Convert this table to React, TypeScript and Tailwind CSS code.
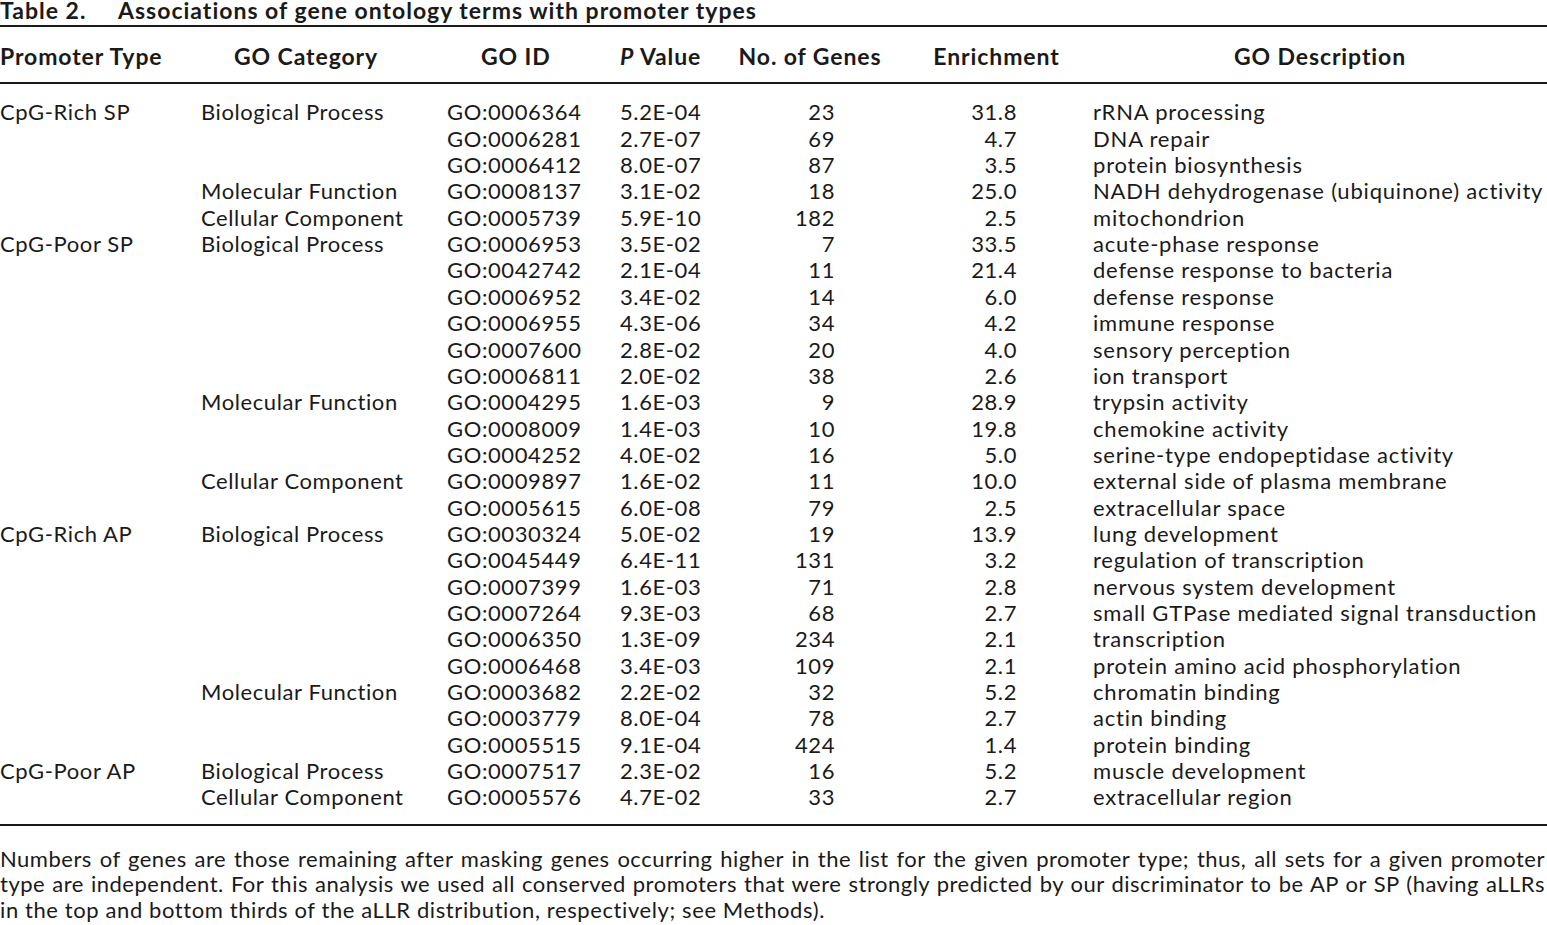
import React from "react";

type Row = { p?: string; c?: string; id: string; pv: string; n: string; e: string; d: string };

const rows: Row[] = [
  { p: "CpG-Rich SP", c: "Biological Process", id: "GO:0006364", pv: "5.2E-04", n: "23", e: "31.8", d: "rRNA processing" },
  { id: "GO:0006281", pv: "2.7E-07", n: "69", e: "4.7", d: "DNA repair" },
  { id: "GO:0006412", pv: "8.0E-07", n: "87", e: "3.5", d: "protein biosynthesis" },
  { c: "Molecular Function", id: "GO:0008137", pv: "3.1E-02", n: "18", e: "25.0", d: "NADH dehydrogenase (ubiquinone) activity" },
  { c: "Cellular Component", id: "GO:0005739", pv: "5.9E-10", n: "182", e: "2.5", d: "mitochondrion" },
  { p: "CpG-Poor SP", c: "Biological Process", id: "GO:0006953", pv: "3.5E-02", n: "7", e: "33.5", d: "acute-phase response" },
  { id: "GO:0042742", pv: "2.1E-04", n: "11", e: "21.4", d: "defense response to bacteria" },
  { id: "GO:0006952", pv: "3.4E-02", n: "14", e: "6.0", d: "defense response" },
  { id: "GO:0006955", pv: "4.3E-06", n: "34", e: "4.2", d: "immune response" },
  { id: "GO:0007600", pv: "2.8E-02", n: "20", e: "4.0", d: "sensory perception" },
  { id: "GO:0006811", pv: "2.0E-02", n: "38", e: "2.6", d: "ion transport" },
  { c: "Molecular Function", id: "GO:0004295", pv: "1.6E-03", n: "9", e: "28.9", d: "trypsin activity" },
  { id: "GO:0008009", pv: "1.4E-03", n: "10", e: "19.8", d: "chemokine activity" },
  { id: "GO:0004252", pv: "4.0E-02", n: "16", e: "5.0", d: "serine-type endopeptidase activity" },
  { c: "Cellular Component", id: "GO:0009897", pv: "1.6E-02", n: "11", e: "10.0", d: "external side of plasma membrane" },
  { id: "GO:0005615", pv: "6.0E-08", n: "79", e: "2.5", d: "extracellular space" },
  { p: "CpG-Rich AP", c: "Biological Process", id: "GO:0030324", pv: "5.0E-02", n: "19", e: "13.9", d: "lung development" },
  { id: "GO:0045449", pv: "6.4E-11", n: "131", e: "3.2", d: "regulation of transcription" },
  { id: "GO:0007399", pv: "1.6E-03", n: "71", e: "2.8", d: "nervous system development" },
  { id: "GO:0007264", pv: "9.3E-03", n: "68", e: "2.7", d: "small GTPase mediated signal transduction" },
  { id: "GO:0006350", pv: "1.3E-09", n: "234", e: "2.1", d: "transcription" },
  { id: "GO:0006468", pv: "3.4E-03", n: "109", e: "2.1", d: "protein amino acid phosphorylation" },
  { c: "Molecular Function", id: "GO:0003682", pv: "2.2E-02", n: "32", e: "5.2", d: "chromatin binding" },
  { id: "GO:0003779", pv: "8.0E-04", n: "78", e: "2.7", d: "actin binding" },
  { id: "GO:0005515", pv: "9.1E-04", n: "424", e: "1.4", d: "protein binding" },
  { p: "CpG-Poor AP", c: "Biological Process", id: "GO:0007517", pv: "2.3E-02", n: "16", e: "5.2", d: "muscle development" },
  { c: "Cellular Component", id: "GO:0005576", pv: "4.7E-02", n: "33", e: "2.7", d: "extracellular region" },
];

const cols = "grid grid-cols-[201px_246px_173px_100px_180px_193px_454px]";

export default function App() {
  return (
    <div className="w-[1547px] h-[925px] bg-white text-[#1a1a1a] overflow-hidden font-['Lato','Liberation_Sans',sans-serif]">
      <div className="h-[22px] leading-[20px] text-[23px] font-bold tracking-[1px] whitespace-nowrap flex">
        <span className="w-[118px]">Table 2.</span>
        <span>Associations of gene ontology terms with promoter types</span>
      </div>
      <div className="mt-[3px] h-[2px] bg-[#1a1a1a]" />
      <div className={`${cols} pt-[16px] pb-[13px] text-[23px] leading-[26.4px] font-bold tracking-[0.9px] whitespace-nowrap`}>
        <div>Promoter Type</div>
        <div className="pl-[33px]">GO Category</div>
        <div className="pl-[34px]">GO ID</div>
        <div>
          <span className="italic">P</span> Value
        </div>
        <div className="text-center">No. of Genes</div>
        <div className="text-center">Enrichment</div>
        <div className="text-center">GO Description</div>
      </div>
      <div className="h-[2px] bg-[#1a1a1a]" />
      <div className="pt-[15px] pb-[13px] text-[22px] leading-[26.35px] tracking-[0.6px] whitespace-nowrap">
        {rows.map((r, i) => (
          <div key={i} className={`${cols}`}>
            <div>{r.p ?? ""}</div>
            <div>{r.c ?? ""}</div>
            <div>{r.id}</div>
            <div>{r.pv}</div>
            <div className="text-right pr-[65px]">{r.n}</div>
            <div className="text-right pr-[76px]">{r.e}</div>
            <div className="tracking-[0.8px]">{r.d}</div>
          </div>
        ))}
      </div>
      <div className="h-[2px] bg-[#1a1a1a]" />
      <div className="pt-[20px] text-[22px] leading-[25.5px] tracking-[0.5px] pr-[2px]">
        <div className="whitespace-nowrap text-justify [text-align-last:justify]">
          Numbers of genes are those remaining after masking genes occurring higher in the list for the given promoter type; thus, all sets for a given promoter
        </div>
        <div className="whitespace-nowrap text-justify [text-align-last:justify]">
          type are independent. For this analysis we used all conserved promoters that were strongly predicted by our discriminator to be AP or SP (having aLLRs
        </div>
        <div className="whitespace-nowrap tracking-[0.6px]">
          in the top and bottom thirds of the aLLR distribution, respectively; see Methods).
        </div>
      </div>
    </div>
  );
}
